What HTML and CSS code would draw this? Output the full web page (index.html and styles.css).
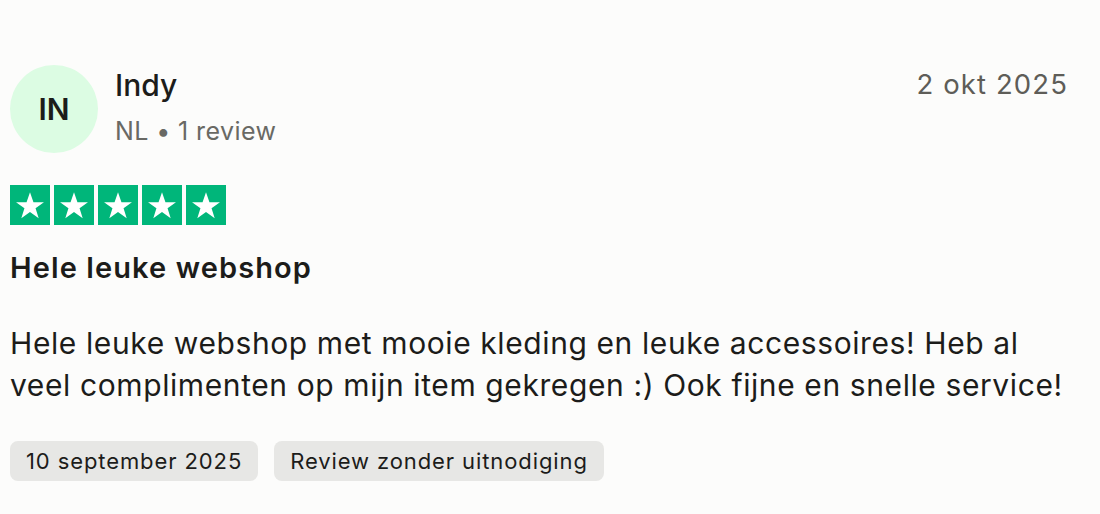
FILE: index.html
```html
<!DOCTYPE html>
<html>

<head>
    <title>Review</title>
    <link rel="stylesheet" href="styles.css">
</head>

<body>
    <article class="review">
        <header class="review-header">
            <div class="consumer">
                <div class="avatar">IN</div>
                <div class="consumer-info">
                    <div class="consumer-name">Indy</div>
                    <div class="consumer-meta">NL &bull; 1 review</div>
                </div>
            </div>
            <time class="review-date">2 okt 2025</time>
        </header>

        <div class="stars">
            <span class="star"><svg viewBox="0 0 24 24"><path d="M12 3.5l2.3 6.6h7l-5.6 4.1 2.1 6.7-5.8-4.2-5.8 4.2 2.1-6.7-5.6-4.1h7z" fill="#fff"/></svg></span>
            <span class="star"><svg viewBox="0 0 24 24"><path d="M12 3.5l2.3 6.6h7l-5.6 4.1 2.1 6.7-5.8-4.2-5.8 4.2 2.1-6.7-5.6-4.1h7z" fill="#fff"/></svg></span>
            <span class="star"><svg viewBox="0 0 24 24"><path d="M12 3.5l2.3 6.6h7l-5.6 4.1 2.1 6.7-5.8-4.2-5.8 4.2 2.1-6.7-5.6-4.1h7z" fill="#fff"/></svg></span>
            <span class="star"><svg viewBox="0 0 24 24"><path d="M12 3.5l2.3 6.6h7l-5.6 4.1 2.1 6.7-5.8-4.2-5.8 4.2 2.1-6.7-5.6-4.1h7z" fill="#fff"/></svg></span>
            <span class="star"><svg viewBox="0 0 24 24"><path d="M12 3.5l2.3 6.6h7l-5.6 4.1 2.1 6.7-5.8-4.2-5.8 4.2 2.1-6.7-5.6-4.1h7z" fill="#fff"/></svg></span>
        </div>

        <h2 class="review-title">Hele leuke webshop</h2>
        <p class="review-text">Hele leuke webshop met mooie kleding en leuke accessoires! Heb al veel complimenten op mijn item gekregen :) Ook fijne en snelle service!</p>

        <div class="tags">
            <span class="tag">10 september 2025</span>
            <span class="tag">Review zonder uitnodiging</span>
        </div>
    </article>
</body>

</html>
```

FILE: styles.css
```css
body {
    margin: 0;
    font-family: Inter, 'Open Sans', sans-serif;
    background-color: #fcfcfb;
    color: #1c1c1a;
}

.review {
    padding: 65px 32px 0 10px;
}

/* Header */
.review-header {
    display: flex;
    justify-content: space-between;
    align-items: flex-start;
}

.consumer {
    display: flex;
    align-items: flex-start;
    gap: 17px;
}

.avatar {
    width: 88px;
    height: 88px;
    border-radius: 50%;
    background-color: #dcfce3;
    display: flex;
    align-items: center;
    justify-content: center;
    font-size: 30px;
    font-weight: 600;
    color: #1c1c1a;
}

.consumer-info {
    padding-top: 1px;
}

.consumer-name {
    font-size: 30px;
    font-weight: 500;
    line-height: 38px;
}

.consumer-meta {
    margin-top: 11px;
    font-size: 25px;
    line-height: 32px;
    color: #696964;
    letter-spacing: 0.4px;
}

.review-date {
    font-size: 27.5px;
    line-height: 36px;
    color: #5e5d58;
    padding-top: 1px;
    letter-spacing: 1.1px;
}

/* Stars */
.stars {
    display: flex;
    gap: 4px;
    margin-top: 32px;
}

.star {
    width: 40px;
    height: 40px;
    background-color: #00b67a;
    display: flex;
    align-items: center;
    justify-content: center;
}

.star svg {
    width: 36px;
    height: 36px;
}

/* Content */
.review-title {
    margin: 25px 0 0;
    font-size: 29px;
    font-weight: 600;
    line-height: 36px;
    letter-spacing: 1.1px;
}

.review-text {
    margin: 36px -18px 0 0;
    font-size: 30px;
    line-height: 42px;
    letter-spacing: 0.6px;
}

.tags {
    display: flex;
    gap: 16px;
    margin-top: 35px;
}

.tag {
    background-color: #e7e7e5;
    border-radius: 8px;
    padding: 0 16px;
    height: 40px;
    line-height: 40px;
    font-size: 22px;
    letter-spacing: 0.9px;
}
```
